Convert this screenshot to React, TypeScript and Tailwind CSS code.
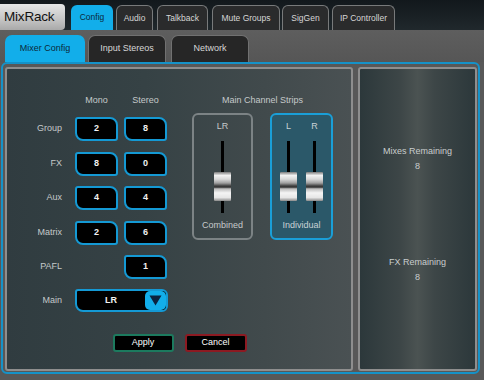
import React from "react";

const topTabs = [
  { label: "Config", w: "w-[42px]", ml: "ml-[6px]", active: true },
  { label: "Audio", w: "w-[37px]", ml: "ml-[3px]", active: false },
  { label: "Talkback", w: "w-[51px]", ml: "ml-[4px]", active: false },
  { label: "Mute Groups", w: "w-[68px]", ml: "ml-[4px]", active: false },
  { label: "SigGen", w: "w-[47px]", ml: "ml-[2px]", active: false },
  { label: "IP Controller", w: "w-[63px]", ml: "ml-[3px]", active: false },
];

const subTabs = [
  { label: "Mixer Config", w: "w-[80px]", ml: "ml-[5px]", active: true },
  { label: "Input Stereos", w: "w-[78px]", ml: "ml-[3px]", active: false },
  { label: "Network", w: "w-[78px]", ml: "ml-[5px]", active: false },
];

function ValBox({ v }: { v: string }) {
  return (
    <div className="w-[43px] h-[24px] bg-black border-2 border-[#1499d4] rounded-tl-[3px] rounded-br-[3px] rounded-tr-[8px] rounded-bl-[8px] flex items-center justify-center text-[#f2f2f2] text-[9px] font-bold">
      {v}
    </div>
  );
}

function Row({ label, a, b, mt }: { label: string; a?: string; b: string; mt: string }) {
  return (
    <div className={`flex items-center ${mt}`}>
      <div className="w-[55px] text-right text-[9px] text-[#c5c9ca]">{label}</div>
      <div className="ml-[13px] w-[43px]">{a !== undefined ? <ValBox v={a} /> : null}</div>
      <div className="ml-[6px]">
        <ValBox v={b} />
      </div>
    </div>
  );
}

function Fader() {
  return (
    <div className="relative w-[3px] h-[72px] bg-black">
      <div className="absolute top-[31px] left-[-7px] w-[17px] h-[29px] rounded-[1px] bg-[linear-gradient(180deg,#7c7c7c_0%,#f2f2f2_12%,#d8d8d8_25%,#a0a0a0_38%,#4a4a4a_47%,#2e2e2e_52%,#bdbdbd_58%,#f4f4f4_72%,#e6e6e6_88%,#8a8a8a_100%)]" />
    </div>
  );
}

export default function App() {
  return (
    <div className="w-[484px] h-[380px] overflow-hidden bg-[#585858] font-['Liberation_Sans',Arial,sans-serif]">
      {/* top bar */}
      <div className="h-[30px] bg-[linear-gradient(180deg,#12181c,#20282c)] flex items-end">
        <div className="w-[65px] h-[26px] rounded-r-[4px] bg-[linear-gradient(180deg,#e6e6e6,#c4c4c4_60%,#a9a9a9)] flex items-center pl-[4px] text-[13.5px] text-[#111] tracking-[-0.2px]">
          MixRack
        </div>
        {topTabs.map((t) => (
          <div
            key={t.label}
            className={`${t.w} ${t.ml} h-[25px] rounded-t-[6px] flex items-center justify-center text-[8.5px] ${
              t.active
                ? "bg-[#12aeea] text-[#0b2a3b]"
                : "bg-[#2a2b2c] border-[1.5px] border-b-0 border-[#787a7b] text-[#d6d6d6]"
            }`}
          >
            {t.label}
          </div>
        ))}
      </div>

      {/* sub tabs */}
      <div className="h-[32px] pt-[5px] flex bg-[linear-gradient(180deg,#5e5e5e,#565656)]">
        {subTabs.map((t) => (
          <div
            key={t.label}
            className={`${t.w} ${t.ml} h-[27px] rounded-t-[7px] flex items-center justify-center text-[9px] ${
              t.active
                ? "bg-[#12aeea] text-[#0b2a3b]"
                : "bg-[#262626] border-[1.5px] border-b-0 border-[#717171] text-[#d6d6d6]"
            }`}
          >
            {t.label}
          </div>
        ))}
      </div>

      {/* main container */}
      <div className="ml-[1px] w-[479px] h-[312px] border-2 border-[#1592c8] rounded-[6px] pt-[3px] pl-[2px] flex gap-[5px]">
        {/* left panel */}
        <div className="w-[348px] h-[304px] border-2 border-[#8e8e8e] rounded-[3px] bg-[linear-gradient(90deg,#303c40_0%,#364245_40%,#414a4c_75%,#4a5153_100%)] flex flex-col">
          <div className="flex pt-[26px]">
            {/* form */}
            <div className="flex flex-col">
              <div className="flex h-[12px] items-center text-[9px] text-[#c5c9ca]">
                <div className="w-[55px]" />
                <div className="ml-[13px] w-[43px] text-center">Mono</div>
                <div className="ml-[6px] w-[43px] text-center">Stereo</div>
              </div>
              <Row label="Group" a="2" b="8" mt="mt-[10px]" />
              <Row label="FX" a="8" b="0" mt="mt-[11px]" />
              <Row label="Aux" a="4" b="4" mt="mt-[10px]" />
              <Row label="Matrix" a="2" b="6" mt="mt-[11px]" />
              <Row label="PAFL" b="1" mt="mt-[10px]" />
              <div className="flex items-center mt-[10px]">
                <div className="w-[55px] text-right text-[9px] text-[#c5c9ca]">Main</div>
                <div className="ml-[13px] w-[93px] h-[23px] bg-black border-2 border-[#1499d4] rounded-tl-[3px] rounded-bl-[8px] rounded-r-[6px] flex items-center overflow-hidden">
                  <div className="flex-1 text-center text-[#f2f2f2] text-[9px] font-bold">LR</div>
                  <div className="w-[21px] h-full bg-[#12aeea] rounded-[5px] flex items-center justify-center">
                    <svg width="13" height="11" viewBox="0 0 13 11">
                      <polygon points="0.5,0.5 12.5,0.5 6.5,10.5" fill="#0b2340" />
                    </svg>
                  </div>
                </div>
              </div>
            </div>

            {/* channel strips */}
            <div className="ml-[24px] flex flex-col w-[141px]">
              <div className="h-[12px] flex items-center justify-center text-[9px] text-[#c5c9ca]">
                Main Channel Strips
              </div>
              <div className="mt-[6px] flex gap-[17px]">
                <div className="w-[61px] h-[127px] border-2 border-[#7c8385] rounded-[6px] flex flex-col items-center pt-[6px]">
                  <div className="h-[12px] text-[9px] text-[#c5c9ca] flex items-center">LR</div>
                  <div className="mt-[8px]">
                    <Fader />
                  </div>
                  <div className="mt-[7px] h-[12px] text-[9px] text-[#c5c9ca] flex items-center">Combined</div>
                </div>
                <div className="w-[63px] h-[127px] border-2 border-[#1a9fd8] bg-[#2b5869] rounded-[6px] flex flex-col items-center pt-[6px]">
                  <div className="flex gap-[9px]">
                    {["L", "R"].map((c) => (
                      <div key={c} className="w-[17px] flex flex-col items-center">
                        <div className="h-[12px] text-[9px] text-[#c9d2d5] flex items-center">{c}</div>
                        <div className="mt-[8px]">
                          <Fader />
                        </div>
                      </div>
                    ))}
                  </div>
                  <div className="mt-[7px] h-[12px] text-[9px] text-[#c9d2d5] flex items-center">Individual</div>
                </div>
              </div>
            </div>
          </div>

          <div className="mt-auto mb-[17px] flex justify-center gap-[11px] pl-[1px]">
            <div className="w-[61px] h-[18px] bg-black border-2 border-[#1c7a5e] rounded-[3px] flex items-center justify-center text-white text-[9px]">
              Apply
            </div>
            <div className="w-[62px] h-[18px] bg-black border-2 border-[#8c1a22] rounded-[3px] flex items-center justify-center text-white text-[9px]">
              Cancel
            </div>
          </div>
        </div>

        {/* right panel */}
        <div className="w-[119px] h-[304px] border-2 border-[#8e8e8e] rounded-[3px] bg-[linear-gradient(90deg,#2c383b_0%,#3d4647_35%,#4b5352_50%,#3d4647_65%,#2c383b_100%)] flex flex-col items-center pt-[77px] text-[9px] text-[#c9cdcd]">
          <div className="h-[12px] flex items-center">Mixes Remaining</div>
          <div className="mt-[3px] h-[12px] flex items-center">8</div>
          <div className="mt-[84px] h-[12px] flex items-center">FX Remaining</div>
          <div className="mt-[3px] h-[12px] flex items-center">8</div>
        </div>
      </div>
    </div>
  );
}
